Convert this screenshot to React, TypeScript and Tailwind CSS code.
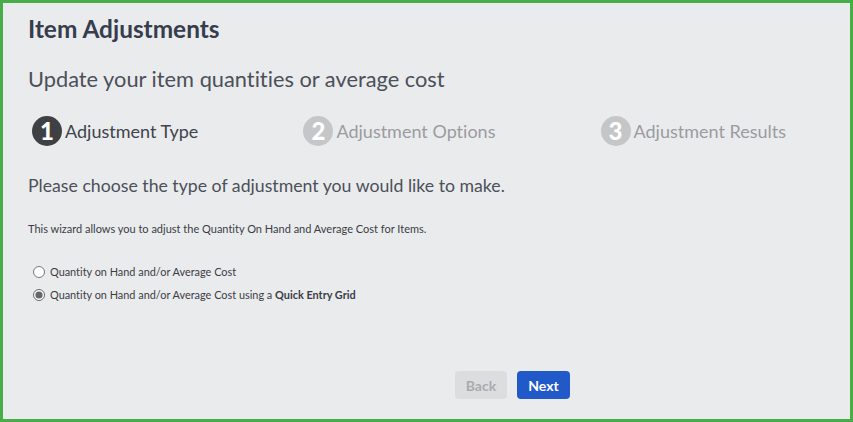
export default function App() {
  const steps = [
    { n: "1", label: "Adjustment Type", active: true },
    { n: "2", label: "Adjustment Options", active: false },
    { n: "3", label: "Adjustment Results", active: false },
  ];

  return (
    <div
      className="w-[853px] h-[422px] border-[3px] border-[#46ad47] bg-[#eaebed] pl-[25px] pt-[11px] [font-variant-ligatures:none]"
      style={{ fontFamily: "Lato, 'Open Sans', sans-serif" }}
    >
      <h1 className="text-[24.4px] leading-[30px] font-bold text-[#363d4d]">Item Adjustments</h1>
      <h2 className="mt-[21px] text-[21.8px] leading-[28px] text-[#4b5059]">
        Update your item quantities or average cost
      </h2>

      <div className="mt-[23px] flex justify-between pl-[4px] pr-[64px] h-[30px] items-center">
        {steps.map((s) => (
          <div key={s.n} className="flex items-center gap-[3px]">
            <span
              className={`flex w-[30px] h-[30px] items-center justify-center rounded-full text-[24px] font-black text-white ${
                s.active ? "bg-[#3f4044]" : "bg-[#c5c6c8]"
              }`}
            >
              {s.n}
            </span>
            <span className={`text-[18px] ${s.active ? "text-[#40434b]" : "text-[#9a9c9f]"}`}>
              {s.label}
            </span>
          </div>
        ))}
      </div>

      <p className="mt-[27px] text-[17.7px] leading-[26px] text-[#4b5059]">
        Please choose the type of adjustment you would like to make.
      </p>

      <p className="mt-[22px] text-[11px] leading-[16px] text-[#3a3d44]">
        This wizard allows you to adjust the Quantity On Hand and Average Cost for Items.
      </p>

      <div className="mt-[25px] flex flex-col gap-[3px] text-[10.9px] text-[#3a3d44]">
        <label className="flex items-center gap-[5px] h-[20px] pl-[5px]">
          <input type="radio" name="adj" className="w-[12px] h-[12px] m-0 accent-[#666]" />
          Quantity on Hand and/or Average Cost
        </label>
        <label className="flex items-center gap-[5px] h-[20px] pl-[5px]">
          <input type="radio" name="adj" defaultChecked className="w-[12px] h-[12px] m-0 accent-[#666]" />
          <span>
            Quantity on Hand and/or Average Cost using a <b className="font-bold">Quick Entry Grid</b>
          </span>
        </label>
      </div>

      <div className="mt-[66px] flex gap-[10px] pl-[427px]">
        <button className="w-[52px] h-[28px] rounded-[4px] bg-[#dcdddf] text-[14px] font-bold text-[#a9abae]">
          Back
        </button>
        <button className="w-[53px] h-[28px] rounded-[4px] bg-[#2159c8] text-[14px] font-bold text-white">
          Next
        </button>
      </div>
    </div>
  );
}
